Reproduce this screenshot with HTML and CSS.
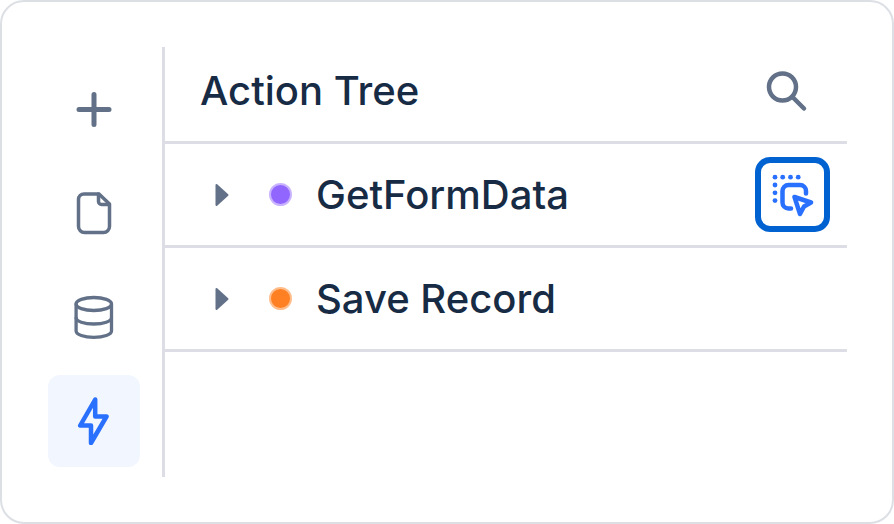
FILE: index.html
```html
<!DOCTYPE html>
<html lang="en">
<head>
    <meta charset="UTF-8">
    <meta name="viewport" content="width=device-width, initial-scale=1.0">
    <title>Action Tree</title>
    <link rel="stylesheet" href="styles.css">
</head>
<body>
    <div class="container">
        <nav class="sidebar" aria-label="Tools">
            <button type="button" class="nav-btn" aria-label="Add">
                <svg class="icon" viewBox="0 0 44 48" stroke-width="5">
                    <path d="M7 24.5H37M22 9.5V39.5"/>
                </svg>
            </button>
            <button type="button" class="nav-btn" aria-label="Pages">
                <svg class="icon" viewBox="0 0 44 48" stroke-width="3.5">
                    <path d="M12 5H27L37.5 15V37.5a6 6 0 0 1-6 6H12.5a6 6 0 0 1-6-6V10.5a5.5 5.5 0 0 1 5.5-5.5Z"/>
                    <path d="M26.500 5V12.5a3 3 0 0 0 3 3H37"/>
                </svg>
            </button>
            <button type="button" class="nav-btn" aria-label="Data">
                <svg class="icon" viewBox="0 0 44 48" stroke-width="3.3">
                    <ellipse cx="21.8" cy="11" rx="17.7" ry="6.5"/>
                    <path d="M4.1 11V38c0 3.5 7.9 6.300 17.7 6.3S39.5 41.5 39.5 38V11"/>
                    <path d="M4.1 24.8c0 3.5 7.9 6.200 17.7 6.2s17.7-2.7 17.7-6.2"/>
                </svg>
            </button>
            <button type="button" class="nav-btn active" aria-label="Actions">
                <svg class="icon" viewBox="0 0 44 48" stroke-width="4.5">
                    <path d="M23.2 2.5L8.2 28.5H19V46L34.5 19.5H23.2Z"/>
                </svg>
            </button>
        </nav>

        <main class="panel">
            <div class="header">
                <h1>Action Tree</h1>
                <button type="button" class="search-btn" aria-label="Search">
                    <svg class="icon" viewBox="0 0 48 48" stroke-width="4.5">
                        <circle cx="20.5" cy="20" r="13.5"/>
                        <path d="M30.5 30L42 41.5"/>
                    </svg>
                </button>
            </div>

            <ul class="tree">
                <li class="tree-row">
                    <button type="button" class="tree-item" aria-expanded="false">
                        <svg class="caret" viewBox="0 0 14 24"><path d="M1.5 2L12.5 12L1.5 22Z"/></svg>
                        <span class="dot purple"></span>
                        <span class="label">GetFormData</span>
                    </button>
                    <button type="button" class="select-btn" aria-label="Select element">
                        <svg class="icon" viewBox="0 0 45 45" stroke-width="4.5">
                            <g class="dots">
                                <circle cx="5" cy="5.2" r="2.4"/>
                                <circle cx="12.7" cy="5.2" r="2.4"/>
                                <circle cx="20.5" cy="5.2" r="2.4"/>
                                <circle cx="28.2" cy="5.2" r="2.4"/>
                                <circle cx="5" cy="13" r="2.4"/>
                                <circle cx="5" cy="20.8" r="2.4"/>
                                <circle cx="5" cy="28.6" r="2.4"/>
                            </g>
                            <path d="M36 21.5V19a6 6 0 0 0-6-6H18.5a6 6 0 0 0-6 6V30.5a6 6 0 0 0 6 6H21"/>
                            <path d="M24.5 25L41 30.5L34 34.5L30 42Z"/>
                        </svg>
                    </button>
                </li>
                <li class="tree-row">
                    <button type="button" class="tree-item" aria-expanded="false">
                        <svg class="caret" viewBox="0 0 14 24"><path d="M1.5 2L12.5 12L1.5 22Z"/></svg>
                        <span class="dot orange"></span>
                        <span class="label">Save Record</span>
                    </button>
                </li>
            </ul>
        </main>
    </div>
</body>
</html>
```
FILE: styles.css
```css
* {
    margin: 0;
    padding: 0;
    box-sizing: border-box;
}

body {
    font-family: Inter, 'Liberation Sans', sans-serif;
    background: white;
    color: #172b45;
}

button {
    border: none;
    background: none;
    font: inherit;
    color: inherit;
    cursor: pointer;
}

.container {
    display: flex;
    min-height: 100vh;
    padding: 45px;
    border: 2px solid #dcdfe4;
    border-radius: 24px;
}

.icon {
    display: block;
    fill: none;
    stroke: currentColor;
    stroke-linecap: round;
    stroke-linejoin: round;
}

/* Sidebar */
.sidebar {
    display: flex;
    flex-direction: column;
    gap: 12px;
    padding: 16px 22px 0 1px;
}

.nav-btn {
    display: flex;
    align-items: center;
    justify-content: center;
    width: 92px;
    height: 92px;
    border-radius: 12px;
    color: #627188;
}

.nav-btn .icon {
    width: 44px;
    height: 48px;
}

.nav-btn.active {
    background: #f1f6ff;
    color: #2970ff;
}

/* Panel */
.panel {
    flex: 1;
    border-left: 3px solid #dddee5;
}

.header {
    display: flex;
    align-items: center;
    justify-content: space-between;
    padding: 20px 37px 26px 35px;
    border-bottom: 3px solid #dddee5;
}

.header h1 {
    font-size: 40px;
    font-weight: 500;
    line-height: 48px;
}

.search-btn {
    color: #627188;
}

.search-btn .icon {
    width: 48px;
    height: 48px;
}

.tree {
    list-style: none;
}

.tree-row {
    display: flex;
    align-items: center;
    height: 104px;
    padding-right: 17px;
    border-bottom: 3px solid #dddee5;
}

.tree-item {
    flex: 1;
    display: flex;
    align-items: center;
    height: 100%;
    padding-left: 50px;
    text-align: left;
}

.caret {
    width: 14px;
    height: 24px;
    margin-right: 40px;
    fill: #627188;
    stroke: #627188;
    stroke-width: 2;
    stroke-linejoin: round;
}

.dot {
    width: 23px;
    height: 23px;
    margin-right: 24px;
    border: 2px solid;
    border-radius: 50%;
}

.dot.purple {
    background-color: #9066ff;
    border-color: #c9b3ff;
}

.dot.orange {
    background-color: #ff8023;
    border-color: #ffbd8c;
}

.label {
    font-size: 40px;
    font-weight: 500;
    line-height: 48px;
}

.select-btn {
    padding: 9px;
    border: 6px solid #0062d1;
    border-radius: 15px;
    color: #2970ff;
}

.select-btn .icon {
    width: 45px;
    height: 45px;
}

.dots {
    fill: currentColor;
    stroke: none;
}
```
